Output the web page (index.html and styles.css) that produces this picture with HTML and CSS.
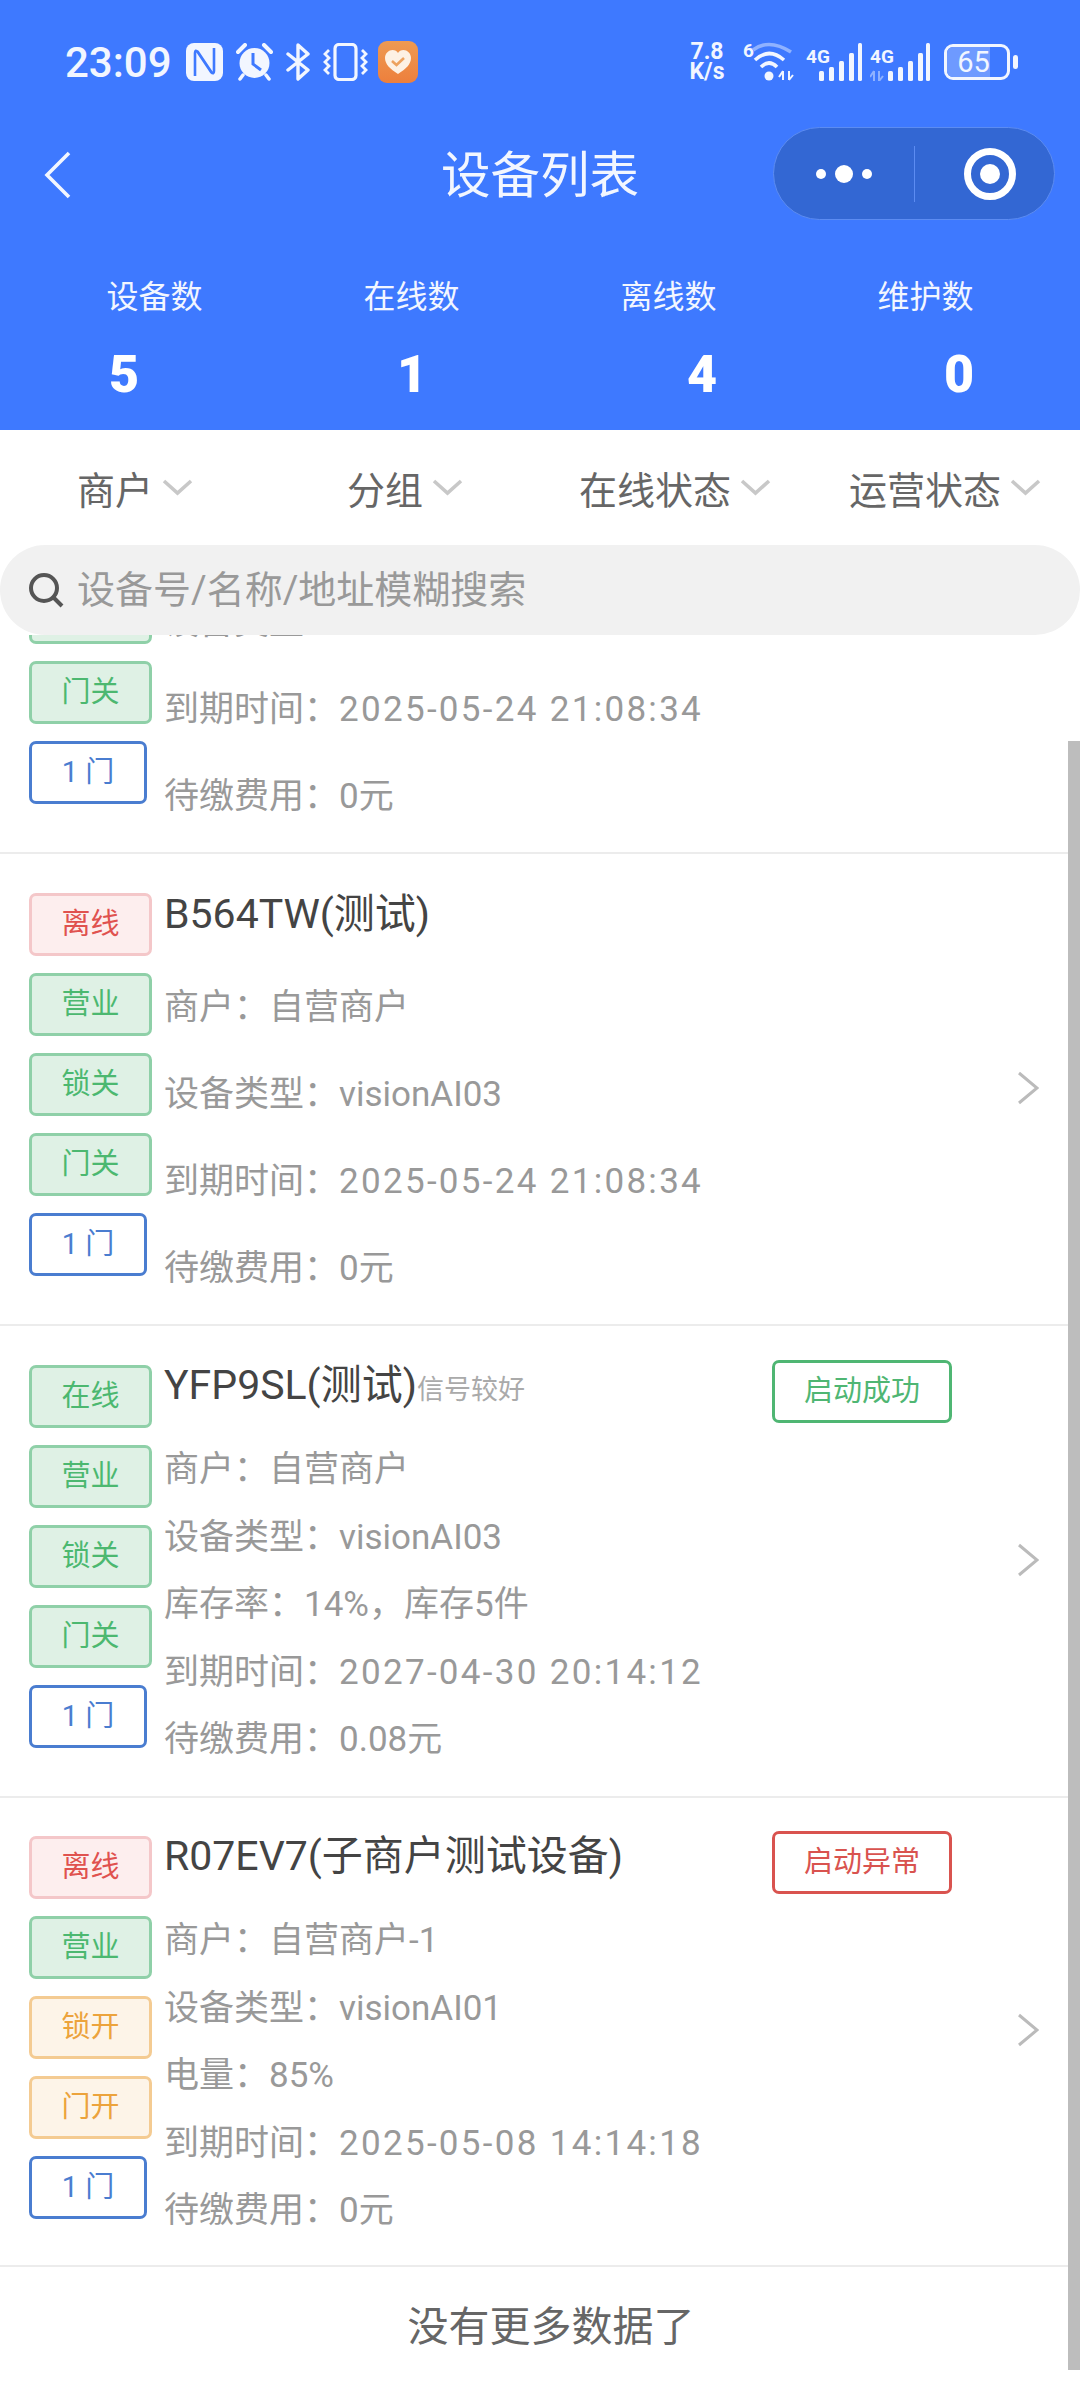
FILE: index.html
```html
<!DOCTYPE html>
<html lang="zh-CN">
<head>
    <meta charset="UTF-8">
    <meta name="viewport" content="width=device-width, initial-scale=1.0">
    <title>设备列表</title>
    <link rel="stylesheet" href="styles.css">
</head>
<body>
    <div class="header">
        <div class="status-bar">
            <span class="clock">23:09</span>
            <svg class="ic-nfc" width="37" height="38" viewBox="0 0 37 38">
                <rect x="0" y="0" width="37" height="38" rx="8" fill="#f2f6ff"/>
                <path d="M9 33V10Q9 6 12 9L26 30M28 5V28Q28 32 25 29L11 8" fill="none" stroke="#3e79ff" stroke-width="2.600"/>
            </svg>
            <svg class="ic-alarm" width="37" height="38" viewBox="0 0 37 38">
                <circle cx="18.500" cy="20" r="15" fill="#f2f6ff"/>
                <path d="M2 9L9 2M35 9L28 2" stroke="#f2f6ff" stroke-width="4" stroke-linecap="round"/>
                <path d="M7 32L4 36M30 32L33 36" stroke="#f2f6ff" stroke-width="3.500" stroke-linecap="round"/>
                <path d="M17 10V21L25 27" fill="none" stroke="#3e79ff" stroke-width="3"/>
            </svg>
            <svg class="ic-bt" width="25" height="38" viewBox="0 0 25 38">
                <path d="M2 11L22 27L12 36V2L22 11L2 27" fill="none" stroke="#f2f6ff" stroke-width="3.400" stroke-linejoin="round" stroke-linecap="round"/>
            </svg>
            <svg class="ic-vibrate" width="45" height="38" viewBox="0 0 45 38">
                <rect x="12" y="1.500" width="21" height="35" rx="4" fill="none" stroke="#f2f6ff" stroke-width="3.200"/>
                <path d="M6 7L2 11L6 15L2 19L6 23L2 27L6 31M39 7L43 11L39 15L43 19L39 23L43 27L39 31" fill="none" stroke="#f2f6ff" stroke-width="2.800"/>
            </svg>
            <svg class="ic-app" width="40" height="42" viewBox="0 0 40 42">
                <defs>
                    <linearGradient id="appBg" x1="0" y1="0" x2="0" y2="1">
                        <stop offset="0" stop-color="#ee9a52"/>
                        <stop offset="1" stop-color="#ed7f3c"/>
                    </linearGradient>
                </defs>
                <rect width="40" height="42" rx="9" fill="url(#appBg)"/>
                <path d="M20 33C12 28 7 23 7 17C7 12 11 9 14.500 9C17 9 19 10 20 12C21 10 23 9 25.500 9C29 9 33 12 33 17C33 23 28 28 20 33Z" fill="#fdf1e4"/>
                <path d="M14 20L18.500 24L26 17" fill="none" stroke="#eda25f" stroke-width="2.600"/>
            </svg>
            <div class="status-right">
                <span class="net-speed">7.8<br>K/s</span>
                <svg class="ic-wifi" width="52" height="40" viewBox="0 0 52 40">
                    <text x="0" y="15" class="sb-mini">6</text>
                    <path d="M10 8Q26 -4 48 10" fill="none" stroke="#8fb2ff" stroke-width="3.600"/>
                    <path d="M12 18Q26 5 41 18" fill="none" stroke="#f2f6ff" stroke-width="3.600"/>
                    <path d="M18 25Q26 17 34 25" fill="none" stroke="#f2f6ff" stroke-width="3.600"/>
                    <circle cx="26" cy="34" r="4.500" fill="#f2f6ff"/>
                    <path d="M40 29V38M40 29L36 35M46 38V29M46 38L50 33" stroke="#f2f6ff" stroke-width="2" fill="none"/>
                </svg>
                <svg class="ic-signal" width="56" height="38" viewBox="0 0 56 38">
                    <text x="0" y="20" class="sb-mini">4G</text>
                    <rect x="13" y="28" width="5" height="10" rx="1.500" fill="#f2f6ff"/>
                    <rect x="23" y="24" width="5" height="14" rx="1.500" fill="#f2f6ff"/>
                    <rect x="33" y="18" width="5" height="20" rx="1.500" fill="#f2f6ff"/>
                    <rect x="43" y="10" width="5" height="28" rx="1.500" fill="#f2f6ff"/>
                    <rect x="52" y="0" width="4" height="38" rx="1.500" fill="#f2f6ff"/>
                </svg>
                <svg class="ic-signal ic-signal-2" width="60" height="38" viewBox="0 0 60 38">
                    <text x="0" y="20" class="sb-mini">4G</text>
                    <path d="M4 28V38M4 28L0 34M9 38V28M9 38L13 33" stroke="#8fb2ff" stroke-width="2" fill="none"/>
                    <rect x="18" y="28" width="5" height="10" rx="1.500" fill="#f2f6ff"/>
                    <rect x="28" y="24" width="5" height="14" rx="1.500" fill="#f2f6ff"/>
                    <rect x="38" y="18" width="5" height="20" rx="1.500" fill="#f2f6ff"/>
                    <rect x="48" y="10" width="5" height="28" rx="1.500" fill="#f2f6ff"/>
                    <rect x="56" y="0" width="4" height="38" rx="1.500" fill="#f2f6ff"/>
                </svg>
                <div class="battery"><span class="battery-level">65</span></div>
                <div class="battery-nub"></div>
            </div>
        </div>
        <div class="nav">
            <svg class="nav-back" width="28" height="48" viewBox="0 0 28 48">
                <path d="M25 2L3 24L25 46" fill="none" stroke="#f2f6ff" stroke-width="3.600"/>
            </svg>
            <div class="nav-title">设备列表</div>
            <div class="capsule">
                <div class="capsule-more">
                    <i class="dot-small"></i><i class="dot-big"></i><i class="dot-small"></i>
                </div>
                <div class="capsule-line"></div>
                <div class="capsule-target"><i></i></div>
            </div>
        </div>
        <div class="stat-labels">
            <div>设备数</div>
            <div>在线数</div>
            <div>离线数</div>
            <div>维护数</div>
        </div>
        <div class="stat-values">
            <div>5</div>
            <div>1</div>
            <div>4</div>
            <div class="stat-last">0</div>
        </div>
    </div>

    <div class="filters">
        <div class="filter">商户<svg width="31" height="17" viewBox="0 0 31 17"><path d="M2 2L15.500 14L29 2" fill="none" stroke="#c8c8c8" stroke-width="3.600"/></svg></div>
        <div class="filter">分组<svg width="31" height="17" viewBox="0 0 31 17"><path d="M2 2L15.500 14L29 2" fill="none" stroke="#c8c8c8" stroke-width="3.600"/></svg></div>
        <div class="filter">在线状态<svg width="31" height="17" viewBox="0 0 31 17"><path d="M2 2L15.500 14L29 2" fill="none" stroke="#c8c8c8" stroke-width="3.600"/></svg></div>
        <div class="filter">运营状态<svg width="31" height="17" viewBox="0 0 31 17"><path d="M2 2L15.500 14L29 2" fill="none" stroke="#c8c8c8" stroke-width="3.600"/></svg></div>
    </div>

    <div class="search">
        <svg width="36" height="36" viewBox="0 0 36 36">
            <circle cx="16" cy="16" r="13" fill="none" stroke="#555" stroke-width="4"/>
            <path d="M25 25L34 34" stroke="#555" stroke-width="4"/>
        </svg>
        <span>设备号/名称/地址模糊搜索</span>
    </div>

    <div class="list">
        <!-- first card is scrolled up under the search box -->
        <div class="card card-clipped">
            <div class="tags">
                <div class="tag tag-green">锁关</div>
                <div class="tag tag-green">门关</div>
                <div class="tag tag-blue">1 门</div>
            </div>
            <div class="main">
                <div class="info">
                    <div>设备类型：visionAI03</div>
                    <div>到期时间：<span class="date">2025-05-24 21:08:34</span></div>
                    <div>待缴费用：0元</div>
                </div>
            </div>
        </div>

        <div class="card card-compact">
            <div class="tags">
                <div class="tag tag-red">离线</div>
                <div class="tag tag-green">营业</div>
                <div class="tag tag-green">锁关</div>
                <div class="tag tag-green">门关</div>
                <div class="tag tag-blue">1 门</div>
            </div>
            <div class="main">
                <div class="title-row"><div class="name-wrap"><span class="dev-name">B564TW(测试)</span></div></div>
                <div class="info">
                    <div>商户：自营商户</div>
                    <div>设备类型：visionAI03</div>
                    <div>到期时间：<span class="date">2025-05-24 21:08:34</span></div>
                    <div>待缴费用：0元</div>
                </div>
            </div>
            <svg class="chevron" width="22" height="34" viewBox="0 0 22 34"><path d="M2 2L20 17L2 32" fill="none" stroke="#bbb" stroke-width="3"/></svg>
        </div>

        <div class="card">
            <div class="tags">
                <div class="tag tag-green">在线</div>
                <div class="tag tag-green">营业</div>
                <div class="tag tag-green">锁关</div>
                <div class="tag tag-green">门关</div>
                <div class="tag tag-blue">1 门</div>
            </div>
            <div class="main">
                <div class="title-row">
                    <div class="name-wrap"><span class="dev-name">YFP9SL(测试)</span><span class="signal">信号较好</span></div>
                    <div class="start-state state-ok">启动成功</div>
                </div>
                <div class="info">
                    <div>商户：自营商户</div>
                    <div>设备类型：visionAI03</div>
                    <div>库存率：14%，库存5件</div>
                    <div>到期时间：<span class="date">2027-04-30 20:14:12</span></div>
                    <div>待缴费用：0.08元</div>
                </div>
            </div>
            <svg class="chevron" width="22" height="34" viewBox="0 0 22 34"><path d="M2 2L20 17L2 32" fill="none" stroke="#bbb" stroke-width="3"/></svg>
        </div>

        <div class="card card-last">
            <div class="tags">
                <div class="tag tag-red">离线</div>
                <div class="tag tag-green">营业</div>
                <div class="tag tag-orange">锁开</div>
                <div class="tag tag-orange">门开</div>
                <div class="tag tag-blue">1 门</div>
            </div>
            <div class="main">
                <div class="title-row">
                    <div class="name-wrap"><span class="dev-name">R07EV7(子商户测试设备)</span></div>
                    <div class="start-state state-bad">启动异常</div>
                </div>
                <div class="info">
                    <div>商户：自营商户-1</div>
                    <div>设备类型：visionAI01</div>
                    <div>电量：85%</div>
                    <div>到期时间：<span class="date">2025-05-08 14:14:18</span></div>
                    <div>待缴费用：0元</div>
                </div>
            </div>
            <svg class="chevron" width="22" height="34" viewBox="0 0 22 34"><path d="M2 2L20 17L2 32" fill="none" stroke="#bbb" stroke-width="3"/></svg>
        </div>

        <div class="no-more">没有更多数据了</div>
        <div class="scrollbar"></div>
    </div>
</body>
</html>
```

FILE: styles.css
```css
* {
    box-sizing: border-box;
}
body {
    margin: 0;
    width: 1080px;
    height: 2382px;
    overflow: hidden;
    background-color: #fff;
    font-family: Roboto, "Noto Sans CJK SC", sans-serif;
}

/* blue header */
.header {
    height: 430px;
    background-color: #3e79ff;
    color: #f2f6ff;
}
.status-bar {
    height: 124px;
    padding: 0 62px 0 65px;
    display: flex;
    align-items: center;
}
.clock {
    font-size: 42px;
    font-weight: 500;
    width: 121px;
}
.ic-alarm, .ic-bt {
    margin-left: 13px;
}
.ic-vibrate {
    margin-left: 12px;
}
.ic-app {
    margin-left: 10px;
}
.status-right {
    margin-left: auto;
    display: flex;
    align-items: center;
}
.net-speed {
    font-size: 23px;
    font-weight: 700;
    line-height: 20px;
    text-align: center;
    width: 38px;
}
.sb-mini {
    font-family: Roboto, sans-serif;
    font-size: 19px;
    font-weight: 700;
    fill: #f2f6ff;
}
.ic-wifi {
    margin-left: 17px;
}
.ic-signal {
    margin-left: 11px;
}
.ic-signal-2 {
    margin-left: 8px;
}
.battery {
    width: 66px;
    height: 36px;
    margin-left: 14px;
    border: 3px solid #f2f6ff;
    border-radius: 9px;
    overflow: hidden;
    font-size: 29px;
    line-height: 30px;
    text-align: center;
}
.battery-level {
    display: block;
    width: 43px;
    padding-left: 10px;
    white-space: nowrap;
    background-color: #6e9aff;
}
.battery-nub {
    width: 5px;
    height: 14px;
    margin-left: 3px;
    border-radius: 3px;
    background-color: #f2f6ff;
}
.nav {
    height: 100px;
    position: relative;
    display: flex;
    align-items: center;
    justify-content: center;
}
.nav-back {
    position: absolute;
    left: 44px;
    top: 27px;
}
.nav-title {
    margin-top: 3px;
    font-size: 49.500px;
    line-height: 60px;
}
.capsule {
    position: absolute;
    left: 773px;
    top: 3px;
    width: 282px;
    height: 93px;
    display: flex;
    align-items: center;
    background-color: #3367d3;
    border: 1.500px solid #5c8cf2;
    border-radius: 47px;
}
.capsule-more {
    width: 140px;
    display: flex;
    align-items: center;
    justify-content: center;
    gap: 9px;
}
.dot-small {
    width: 10px;
    height: 10px;
    border-radius: 50%;
    background-color: #fff;
}
.dot-big {
    width: 18px;
    height: 18px;
    border-radius: 50%;
    background-color: #fff;
}
.capsule-line {
    width: 1px;
    height: 56px;
    background-color: #5c8cf2;
}
.capsule-target {
    width: 52px;
    height: 52px;
    margin-left: 49px;
    border: 7px solid #fff;
    border-radius: 50%;
    display: flex;
    align-items: center;
    justify-content: center;
}
.capsule-target i {
    width: 20px;
    height: 20px;
    border-radius: 50%;
    background-color: #fff;
}
.stat-labels {
    margin-top: 50px;
    padding: 0 26px;
    display: grid;
    grid-template-columns: repeat(4, 257px);
    font-size: 32px;
    line-height: 46px;
    text-align: center;
}
.stat-values {
    margin-top: 25px;
    padding-left: 2px;
    display: grid;
    grid-template-columns: 244px 332px 248px 1fr;
    color: #fff;
    font-size: 52px;
    font-weight: 900;
    line-height: 60px;
    text-align: center;
}
.stat-last {
    padding-left: 12px;
}

/* filters and search */
.filters {
    height: 115px;
    display: grid;
    grid-template-columns: repeat(4, 270px);
    align-items: center;
    color: #666;
    font-size: 38px;
}
.filter {
    display: flex;
    align-items: center;
    justify-content: center;
    gap: 9px;
}
.search {
    height: 90px;
    padding-left: 28px;
    display: flex;
    align-items: center;
    gap: 13px;
    background-color: #f1f1f1;
    border-radius: 45px;
    color: #999;
    font-size: 38px;
    line-height: 86px;
}

/* device list */
.list {
    height: 1747px;
    position: relative;
    overflow: hidden;
}
.card {
    height: 472px;
    padding: 39px 41px 0 29px;
    display: flex;
    align-items: flex-start;
    border-bottom: 2px solid #ececec;
}
.card-clipped {
    height: 219px;
    padding: 0 41px 48px 29px;
    align-items: flex-end;
    overflow: hidden;
}
.card-clipped .main {
    margin-bottom: -26.500px;
}
.card-clipped .info {
    margin-top: 0;
    display: flex;
    flex-direction: column;
    gap: 19.500px;
}
.card-last {
    height: 469px;
    padding-top: 38px;
}
.tags {
    width: 123px;
    display: flex;
    flex-direction: column;
    align-items: flex-start;
    gap: 17px;
}
.tag {
    width: 123px;
    height: 63px;
    flex-shrink: 0;
    border: 3px solid;
    border-radius: 7px;
    font-size: 29px;
    line-height: 57px;
    text-align: center;
}
.tag-green {
    background-color: #dff1e5;
    border-color: #8fd0a8;
    color: #4cb870;
}
.tag-red {
    background-color: #fdeeee;
    border-color: #f4c7c9;
    color: #e0524f;
}
.tag-orange {
    background-color: #fdf4e8;
    border-color: #f4cb92;
    color: #eca33c;
}
.tag-blue {
    width: 118px;
    background-color: #fff;
    border-color: #4a7dd0;
    color: #4a7dd0;
}
.main {
    flex: 1;
    margin: -5px 65px 0 12px;
}
.title-row {
    display: flex;
    align-items: flex-start;
    justify-content: space-between;
    height: 63px;
}
.name-wrap {
    display: flex;
    align-items: baseline;
}
.dev-name {
    color: #444;
    font-size: 41px;
    line-height: 50px;
}
.signal {
    color: #aaa;
    font-size: 27px;
}
.start-state {
    width: 180px;
    height: 63px;
    border: 3px solid;
    border-radius: 7px;
    font-size: 29px;
    line-height: 57px;
    text-align: center;
}
.state-ok {
    border-color: #4fb673;
    color: #4fb673;
}
.state-bad {
    border-color: #d9534f;
    color: #d9534f;
}
.info {
    margin-top: 13px;
    color: #999;
    font-size: 35px;
    line-height: 67.500px;
}
.date {
    letter-spacing: 2.300px;
}
.card-compact .main {
    margin-top: -1px;
}
.card-compact .title-row {
    height: 50px;
}
.card-compact .name-wrap {
    margin-top: -3px;
}
.card-compact .info {
    margin-top: 32px;
    display: flex;
    flex-direction: column;
    gap: 19.500px;
}
.chevron {
    align-self: center;
    margin-top: -41px;
}
.no-more {
    margin-top: 2px;
    padding-left: 22px;
    height: 116px;
    color: #666;
    font-size: 41px;
    line-height: 116px;
    text-align: center;
}
.scrollbar {
    position: absolute;
    right: 0;
    top: 106px;
    width: 12px;
    height: 1629px;
    background-color: #bdbdbd;
}
```
